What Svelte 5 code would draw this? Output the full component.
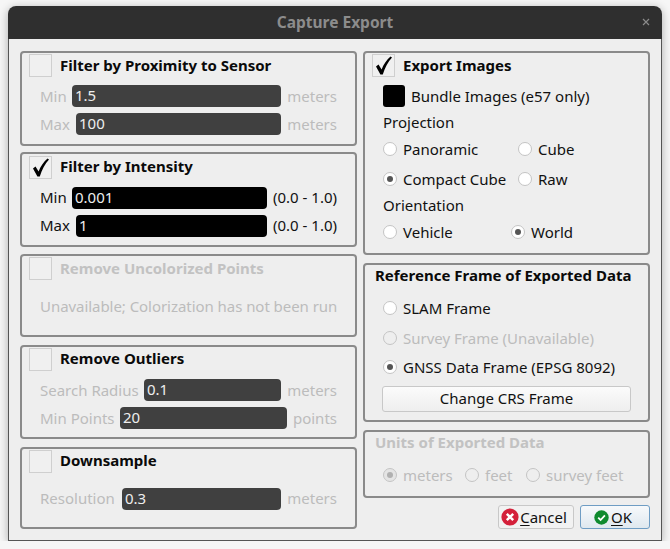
<script>
  const checkPath = "M3 11.5 L5.5 9.5 L8.6 14.5 C10.5 9.5 13.5 5 17.5 1.5 L19 2.5 C15 7 12 12.5 9.8 19.5 L7.4 19.5 Z";
</script>

{#snippet check(on, dim = false)}
  <span class="check" class:dim>
    {#if on}
      <svg width="22" height="22" viewBox="0 0 22 22"><path d={checkPath} fill="#000" /></svg>
    {/if}
  </span>
{/snippet}

{#snippet radio(label, on = false, dim = false, extra = "")}
  <span class="radio {extra}" class:dim>
    <span class="dot" class:on></span>
    <span>{label}</span>
  </span>
{/snippet}

{#snippet field(label, value, unit, cls = "", dark = false, labelCls = "")}
  <div class="row {cls}">
    <span class="lab {labelCls}">{label}</span>
    <span class="input" class:dark>{value}</span>
    <span class="unit">{unit}</span>
  </div>
{/snippet}

<div class="window">
  <header class="title">
    <span>Capture Export</span>
    <svg class="close" width="8" height="8" viewBox="0 0 8 8"><path d="M1 1 L7 7 M7 1 L1 7" stroke="#8a8a8a" stroke-width="1.2" /></svg>
  </header>
  <div class="body">
    <div class="columns">
      <div class="col">
        <section class="group g1 off">
          <div class="head">{@render check(false)}<b>Filter by Proximity to Sensor</b></div>
          {@render field("Min", "1.5", "meters", "first", false, "min")}
          {@render field("Max", "100", "meters", "", false, "max")}
        </section>
        <section class="group g2 up">
          <div class="head">{@render check(true)}<b>Filter by Intensity</b></div>
          {@render field("Min", "0.001", "(0.0 - 1.0)", "first", true, "min")}
          {@render field("Max", "1", "(0.0 - 1.0)", "", true, "max")}
        </section>
        <section class="group g3 off">
          <div class="head">{@render check(false)}<b class="dimtext">Remove Uncolorized Points</b></div>
          <p class="na">Unavailable; Colorization has not been run</p>
        </section>
        <section class="group g4 off">
          <div class="head">{@render check(false)}<b class="lift">Remove Outliers</b></div>
          {@render field("Search Radius", "0.1", "meters", "first", false, "search")}
          {@render field("Min Points", "20", "points", "", false, "minpts")}
        </section>
        <section class="group g5 off up">
          <div class="head">{@render check(false)}<b>Downsample</b></div>
          {@render field("Resolution", "0.3", "meters", "res", false, "resl")}
        </section>
      </div>
      <div class="col">
        <section class="group h204">
          <div class="head">{@render check(true)}<b>Export Images</b></div>
          <div class="bundle"><span class="blk"></span><span>Bundle Images (e57 only)</span></div>
          <div class="cap proj">Projection</div>
          <div class="radios r1">{@render radio("Panoramic")}{@render radio("Cube", false, false, "c2")}</div>
          <div class="radios r2">{@render radio("Compact Cube", true)}{@render radio("Raw", false, false, "c2")}</div>
          <div class="cap ori">Orientation</div>
          <div class="radios r3">{@render radio("Vehicle")}{@render radio("World", true, false, "c3")}</div>
        </section>
        <section class="group h159 frame">
          <b class="gt">Reference Frame of Exported Data</b>
          <div class="fr f1">{@render radio("SLAM Frame")}</div>
          <div class="fr">{@render radio("Survey Frame (Unavailable)", false, true)}</div>
          <div class="fr">{@render radio("GNSS Data Frame (EPSG 8092)", true)}</div>
          <button class="btn crs">Change CRS Frame</button>
        </section>
        <section class="group h68 units">
          <b class="gt dimtext">Units of Exported Data</b>
          <div class="uradios">
            {@render radio("meters", true, true)}
            {@render radio("feet", false, true)}
            {@render radio("survey feet", false, true)}
          </div>
        </section>
        <div class="actions">
          <button class="btn act cancel">
            <svg width="18" height="18" viewBox="0 0 18 18"><circle cx="9" cy="9" r="8.6" fill="#d4203a" /><path d="M5.8 5.8 L12.2 12.2 M12.2 5.8 L5.8 12.2" stroke="#fff" stroke-width="2.4" /></svg>
            <span><u>C</u>ancel</span>
          </button>
          <button class="btn act ok">
            <svg width="15" height="15" viewBox="0 0 15 15"><circle cx="7.5" cy="7.5" r="7.2" fill="#0f8a2f" /><path d="M4.2 7.6 L6.6 10 L10.9 5.4" fill="none" stroke="#fff" stroke-width="1.8" /></svg>
            <span><u>O</u>K</span>
          </button>
        </div>
      </div>
    </div>
  </div>
</div>

<style>
  :global(body) {
    margin: 0;
    background: #f6f6f6;
  }
  .window {
    box-sizing: border-box;
    width: 654px;
    height: 535px;
    margin: 6px 0 0 8px;
    border-radius: 8px 8px 0 0;
    box-shadow: 0 2px 10px rgba(0, 0, 0, 0.3);
    font-family: "Noto Sans", sans-serif;
    font-size: 15px;
    color: #111;
    display: flex;
    flex-direction: column;
    overflow: hidden;
  }
  .title {
    height: 33px;
    flex: none;
    box-sizing: border-box;
    padding-bottom: 2px;
    background: #2f2f2f;
    color: #8c8c8c;
    font-weight: 700;
    font-size: 15.5px;
    display: flex;
    align-items: center;
    justify-content: center;
    position: relative;
  }
  .close {
    position: absolute;
    right: 12px;
    top: 12px;
  }
  .body {
    flex: 1;
    background: #eeeeee;
    border: 1px solid #555;
    border-top: 0;
    padding: 12px 11px 0 11px;
  }
  .columns {
    display: flex;
    gap: 6px;
  }
  .col {
    display: flex;
    flex-direction: column;
  }
  .col:first-child {
    width: 337px;
  }
  .col:last-child {
    width: 287px;
  }
  .group {
    box-sizing: border-box;
    border: 2px solid #8a8a8a;
    border-radius: 4px;
    padding: 1px 18px 0 7px;
  }
  .g1 { height: 95px; margin-bottom: 6px; }
  .g2 { height: 95px; margin-bottom: 7px; padding-top: 2px; }
  .g3 { height: 83px; margin-bottom: 8px; }
  .g4 { height: 94px; margin-bottom: 8px; }
  .g5 { height: 82px; }
  .h204 { height: 204px; margin-bottom: 8px; }
  .h159 { height: 159px; margin-bottom: 8px; }
  .h68 { height: 68px; }
  .head {
    display: flex;
    align-items: center;
    gap: 8px;
    height: 22px;
  }
  b {
    font-weight: 700;
    color: #0a0a0a;
  }
  b.dimtext {
    color: #c2c2c2;
  }
  b.lift,
  .up b {
    margin-bottom: 2px;
  }
  .check {
    box-sizing: border-box;
    width: 23px;
    height: 23px;
    flex: none;
    border: 1px solid #cfcfcf;
    background: #f0f0f0;
    display: block;
    position: relative;
  }
  .check svg {
    display: block;
  }
  .row {
    display: flex;
    align-items: center;
    height: 22px;
    margin-top: 6px;
    padding-left: 11px;
  }
  .row.first {
    margin-top: 9px;
  }
  .row.res {
    margin-top: 16px;
  }
  .lab {
    flex: none;
  }
  .lab.min { width: 32px; }
  .lab.max { width: 36px; }
  .lab.search { width: 104px; }
  .lab.minpts { width: 80px; }
  .lab.resl { width: 82px; }
  .up .lab,
  .up .unit {
    margin-bottom: 2px;
  }
  .off .lab,
  .off .unit {
    color: #bcbcbc;
  }
  .input {
    flex: 1;
    height: 22px;
    box-sizing: border-box;
    padding: 0 3px;
    background: #404040;
    color: #eee;
    border-radius: 4px;
    line-height: 20px;
  }
  .input.dark {
    background: #000;
  }
  .unit {
    flex: none;
    margin-left: 6px;
    white-space: nowrap;
  }
  .na {
    margin: 17px 0 0 11px;
    color: #bcbcbc;
    white-space: nowrap;
    letter-spacing: -0.05px;
  }
  .bundle {
    display: flex;
    align-items: center;
    gap: 6px;
    margin: 9px 0 0 11px;
    height: 22px;
  }
  .blk {
    width: 22px;
    height: 22px;
    background: #000;
    border-radius: 3px;
  }
  .cap {
    margin-left: 11px;
    line-height: 20px;
  }
  .proj { margin-top: 5px; }
  .ori { margin-top: 6px; }
  .radios {
    display: flex;
    margin-left: 11px;
    height: 20px;
  }
  .r1 { margin-top: 7px; }
  .r2 { margin-top: 10px; }
  .r3 { margin-top: 7px; }
  .radio {
    display: inline-flex;
    align-items: center;
    gap: 6px;
    white-space: nowrap;
  }
  .radios .radio:first-child {
    width: 135px;
  }
  .radios .c3 {
    margin-left: -7px;
  }
  .radio.dim {
    color: #bcbcbc;
  }
  .dot {
    box-sizing: border-box;
    width: 14px;
    height: 14px;
    border-radius: 50%;
    border: 1px solid #c4c4c4;
    background: #fff;
    flex: none;
    display: grid;
    place-items: center;
  }
  .dot.on::after {
    content: "";
    width: 6px;
    height: 6px;
    border-radius: 50%;
    background: #555;
  }
  .dim .dot {
    background: transparent;
  }
  .dim .dot.on {
    background: #e4e4e4;
  }
  .dim .dot.on::after {
    background: #b0b0b0;
  }
  .frame,
  .units {
    padding-left: 10px;
    padding-top: 0;
  }
  .gt {
    display: block;
    line-height: 20px;
    white-space: nowrap;
  }
  .fr {
    height: 20px;
    margin-top: 9.5px;
    margin-left: 8px;
    display: flex;
  }
  .fr.f1 { margin-top: 13px; }
  .btn {
    font: inherit;
    color: #111;
    box-sizing: border-box;
    border: 1px solid #c8c8c8;
    border-radius: 3px;
    background: linear-gradient(#fbfbfb, #eeeeee);
    padding: 0;
  }
  .crs {
    display: block;
    width: 249px;
    height: 26px;
    margin: 9px 0 0 7px;
    padding-bottom: 2px;
  }
  .uradios {
    display: grid;
    grid-template-columns: 82px 61px auto;
    margin: 13px 0 0 8px;
  }
  .actions {
    display: flex;
    justify-content: flex-end;
    gap: 6px;
    margin-top: 7px;
  }
  .act {
    height: 24px;
    display: flex;
    align-items: center;
    justify-content: center;
    gap: 1px;
  }
  .cancel {
    width: 76px;
    background: #f2f2f2;
    padding-right: 4px;
  }
  .ok {
    width: 70px;
    border-color: #6f9dc4;
    background: linear-gradient(#f7f9fb, #dfe8ef);
    gap: 2px;
    padding-right: 4px;
  }
  u {
    text-underline-offset: 2px;
  }
</style>
